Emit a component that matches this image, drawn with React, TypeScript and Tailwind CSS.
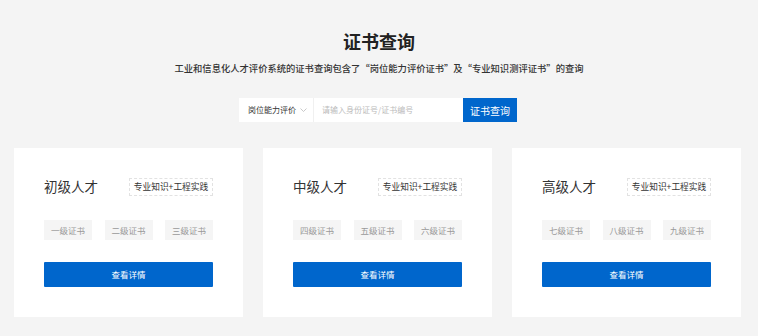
const levels = [
  { title: '初级人才', certs: ['一级证书', '二级证书', '三级证书'] },
  { title: '中级人才', certs: ['四级证书', '五级证书', '六级证书'] },
  { title: '高级人才', certs: ['七级证书', '八级证书', '九级证书'] },
];

const font = { fontFamily: '"Noto Sans CJK SC", "Noto Sans", sans-serif' };

function LevelCard({ title, certs }: { title: string; certs: string[] }) {
  return (
    <div className="w-[229px] bg-white px-[30px] pt-[30px] pb-[30px]">
      <div className="flex h-[18px] items-center justify-between">
        <span className="text-[13.5px] leading-none text-[#333]">{title}</span>
        <span className="flex h-[18px] w-[84px] items-center justify-center border border-dashed border-[#e2e2e2] text-[8.7px] text-[#333]">
          专业知识+工程实践
        </span>
      </div>
      <div className="mt-[24px] flex justify-between">
        {certs.map((c) => (
          <span
            key={c}
            className="flex h-[20px] w-[48px] items-center justify-center bg-[#f5f5f5] text-[8.5px] text-[#999]"
          >
            {c}
          </span>
        ))}
      </div>
      <button className="mt-[22px] flex h-[25px] w-full items-center justify-center rounded-[1px] bg-[#0066cc] text-[8.5px] text-white">
        查看详情
      </button>
    </div>
  );
}

export default function App() {
  return (
    <div className="flex h-[336px] w-[758px] flex-col items-center bg-[#f4f4f4]" style={font}>
      <h1 className="pt-[29px] text-[18px] font-bold leading-[24px] text-[#222]">证书查询</h1>
      <p className="mt-[8px] text-[9.3px] font-medium leading-[14px] text-[#333]">
        工业和信息化人才评价系统的证书查询包含了“岗位能力评价证书”及“专业知识测评证书”的查询
      </p>
      <div className="mt-[23px] flex h-[24px] w-[278px] ml-[-2px]">
        <div className="flex w-[75px] items-center gap-[3px] border-r border-[#f0f0f0] bg-white pl-[9px] text-[8px] text-[#333]">
          岗位能力评价
          <svg width="7" height="4" viewBox="0 0 7 4" fill="none" className="ml-[1px]">
            <path d="M0.5 0.5L3.5 3.5L6.5 0.5" stroke="#bbb" strokeWidth="0.8" />
          </svg>
        </div>
        <div className="flex flex-1 items-center bg-white pl-[8px] text-[8px] text-[#bbb]">
          请输入身份证号/证书编号
        </div>
        <button className="flex w-[54px] items-center justify-center bg-[#0066cc] text-[10px] text-white">
          证书查询
        </button>
      </div>
      <div className="mt-[26px] flex w-full gap-[20px] px-[14px]">
        {levels.map((l) => (
          <LevelCard key={l.title} title={l.title} certs={l.certs} />
        ))}
      </div>
    </div>
  );
}
